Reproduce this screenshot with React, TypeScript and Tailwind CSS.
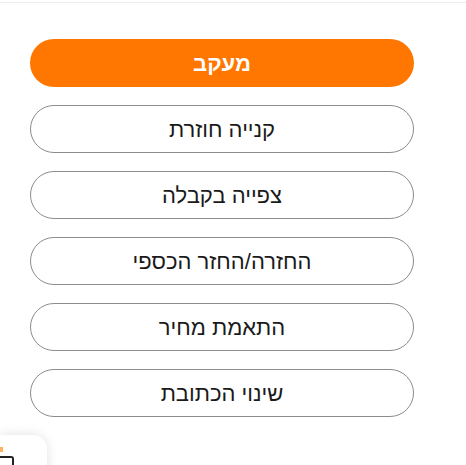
import React from "react";

const items = ["קנייה חוזרת", "צפייה בקבלה", "החזרה/החזר הכספי", "התאמת מחיר", "שינוי הכתובת"];

export default function App() {
  return (
    <div
      dir="rtl"
      className="relative w-[466px] h-[465px] overflow-hidden bg-white"
      style={{ fontFamily: '"Liberation Sans", Arial, sans-serif' }}
    >
      <div className="h-[3px] border-b border-[#ededed]" />
      <div className="flex flex-col gap-[18px] pt-[36px] pr-[52px] pl-[30px]">
        <button className="h-[48px] w-full rounded-full bg-[#ff7700] text-white text-[22px] font-semibold flex items-center justify-center">
          מעקב
        </button>
        {items.map((t) => (
          <button
            key={t}
            className="h-[48px] w-full rounded-full border border-[#8c8c8c] bg-white text-[#1a1a1a] text-[22px] flex items-center justify-center"
          >
            {t}
          </button>
        ))}
      </div>
      <div className="absolute left-0 top-[435px] w-[47px] h-[40px] bg-white rounded-tr-[14px] shadow-[0_0_12px_rgba(0,0,0,0.12)] overflow-hidden">
        <div className="absolute left-0 top-[12px] w-[3px] h-[5px] bg-[#ffb060]" />
        <div className="absolute left-[-4px] top-[21px] w-[18px] h-[20px] border-t-2 border-r-2 border-[#222] rounded-tr-[3px]" />
      </div>
    </div>
  );
}
